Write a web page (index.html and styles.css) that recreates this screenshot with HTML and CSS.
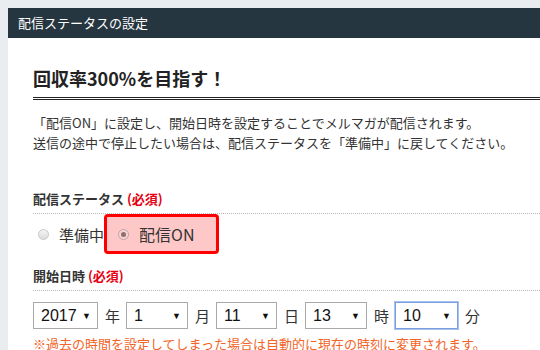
FILE: index.html
```html
<!DOCTYPE html>
<html lang="ja">
<head>
    <meta charset="UTF-8">
    <title>配信ステータスの設定</title>
    <link rel="stylesheet" href="styles.css">
</head>
<body>
    <div class="panel">
        <div class="panel-header">配信ステータスの設定</div>
        <div class="panel-body">
            <h2 class="title">回収率300%を目指す！</h2>
            <p class="lead">「配信ON」に設定し、開始日時を設定することでメルマガが配信されます。<br>送信の途中で停止したい場合は、配信ステータスを「準備中」に戻してください。</p>

            <div class="field status-field">
                <div class="field-label">配信ステータス <span class="required">(必須)</span></div>
                <div class="radio-row">
                    <label class="radio-item"><span class="radio"></span>準備中</label>
                    <label class="radio-item selected"><span class="radio checked"></span>配信ON</label>
                </div>
            </div>

            <div class="field date-field">
                <div class="field-label">開始日時 <span class="required">(必須)</span></div>
                <div class="date-row">
                    <div class="select w-year"><span>2017</span><span class="arrow">▼</span></div>
                    <span class="unit">年</span>
                    <div class="select w-month"><span>1</span><span class="arrow">▼</span></div>
                    <span class="unit">月</span>
                    <div class="select w-day"><span>11</span><span class="arrow">▼</span></div>
                    <span class="unit">日</span>
                    <div class="select w-hour"><span>13</span><span class="arrow">▼</span></div>
                    <span class="unit">時</span>
                    <div class="select w-min focused"><span>10</span><span class="arrow">▼</span></div>
                    <span class="unit">分</span>
                </div>
                <p class="note">※過去の時間を設定してしまった場合は自動的に現在の時刻に変更されます。</p>
            </div>
        </div>
    </div>
</body>
</html>
```

FILE: styles.css
```css
body {
    margin: 0;
    background-color: #e9edf0;
    font-family: "Noto Sans CJK JP", "Liberation Sans", sans-serif;
    color: #333;
    overflow: hidden;
}
.panel {
    margin: 8px 0 0 8px;
    background-color: #fff;
    height: 400px;
}
.panel-header {
    background-color: #263640;
    color: #fff;
    font-size: 13px;
    height: 30px;
    line-height: 30px;
    padding-left: 10px;
}
.panel-body {
    padding: 27px 0 0 25px;
}
.title {
    margin: 0;
    font-size: 18px;
    font-weight: bold;
    color: #222;
    line-height: 26px;
    padding-bottom: 6px;
    border-bottom: 3px double #222;
}
.lead {
    margin: 13px 0 0 0;
    font-size: 13px;
    line-height: 20px;
}
.field-label {
    font-size: 13px;
    font-weight: bold;
    line-height: 20px;
    padding-bottom: 4px;
    border-bottom: 1px dotted #b8b8b8;
}
.required {
    color: #e60012;
}
.status-field {
    margin-top: 36px;
}
.date-field {
    margin-top: 12px;
}
.radio-row {
    display: flex;
    align-items: center;
    height: 40px;
    padding-left: 5px;
    font-size: 15px;
}
.radio-item {
    display: flex;
    align-items: center;
    gap: 10px;
    height: 100%;
}
.radio-item.selected {
    box-sizing: border-box;
    height: 40px;
    padding: 0 22px 0 11px;
    background-color: #ffc8c8;
    border: 3px solid #ff0000;
    border-radius: 4px;
    font-size: 16px;
}
.radio {
    width: 11px;
    height: 11px;
    border-radius: 50%;
    border: 1px solid #c8c8c8;
    background: linear-gradient(#f4f4f4, #dcdcdc);
    box-sizing: border-box;
    display: flex;
    align-items: center;
    justify-content: center;
}
.radio.checked {
    border-color: #c8a0a0;
    background: #f0d6d6;
}
.radio.checked::after {
    content: "";
    width: 5px;
    height: 5px;
    border-radius: 50%;
    background-color: #9a6a6a;
}
.date-row {
    display: flex;
    align-items: center;
    margin-top: 11px;
}
.select {
    box-sizing: border-box;
    height: 27px;
    border: 1px solid #a9a9a9;
    display: flex;
    align-items: center;
    justify-content: space-between;
    padding: 0 6px 0 7px;
    font-family: "Liberation Sans", sans-serif;
    font-size: 16px;
    color: #111;
}
.select.focused {
    border-color: #7a9ee0;
    box-shadow: 0 0 0 1px #a8c2f0;
}
.arrow {
    font-size: 9px;
}
.w-year { width: 65px; }
.w-month { width: 62px; }
.w-day { width: 61px; }
.w-hour { width: 62px; }
.w-min { width: 63px; }
.unit {
    flex: 0 0 16px;
    font-size: 15px;
    margin: 0 5px 0 7px;
}
.note {
    margin: 6px 0 0 0;
    font-size: 13px;
    color: #f26428;
    line-height: 18px;
}
```
